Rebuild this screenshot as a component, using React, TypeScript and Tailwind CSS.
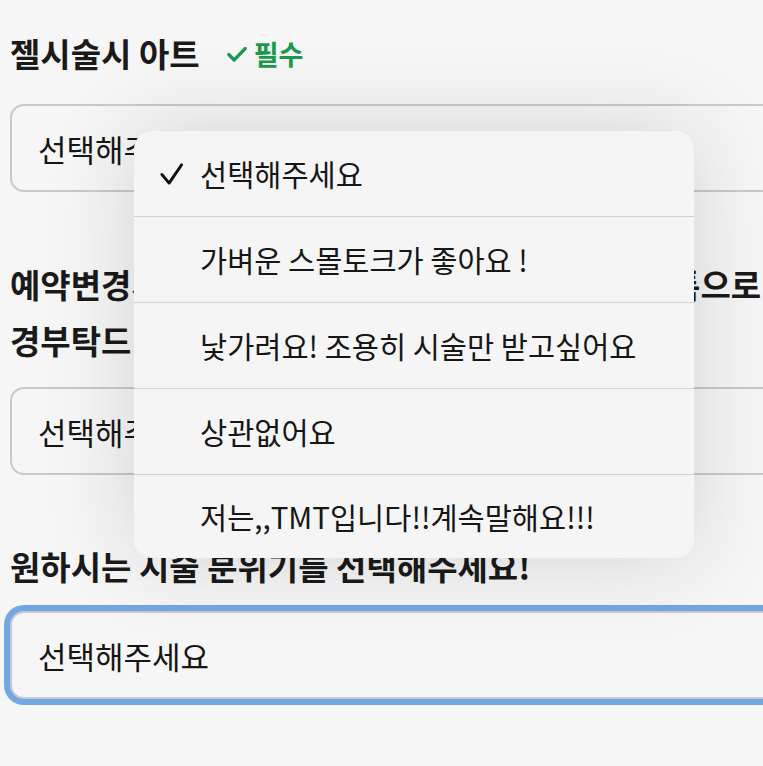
import React from "react";

const FONT = { fontFamily: '"Noto Sans CJK KR", "Noto Sans", sans-serif' };

function GreenCheck({ className }: { className?: string }) {
  return (
    <svg viewBox="0 0 24 24" fill="none" stroke="currentColor" strokeWidth={3.6} strokeLinecap="round" strokeLinejoin="round" className={className}>
      <path d="M3 12.5l6 6L21 6" />
    </svg>
  );
}

function BlackCheck({ className }: { className?: string }) {
  return (
    <svg viewBox="0 0 24 24" fill="none" stroke="currentColor" strokeWidth={3} strokeLinecap="round" strokeLinejoin="round" className={className}>
      <path d="M2 13l7.5 9L22.5 3" />
    </svg>
  );
}

function SelectBox({ focused = false }: { focused?: boolean }) {
  return (
    <div
      className={
        "w-[820px] h-[88px] rounded-[14px] border-2 border-[#c9c9c9] bg-[#f6f6f6] flex items-center pl-[26px] " +
        (focused ? "shadow-[0_0_0_6px_#72a7e6]" : "")
      }
    >
      <span className="text-[31px] text-[#161616] leading-none">선택해주세요</span>
    </div>
  );
}

const options = [
  "선택해주세요",
  "가벼운 스몰토크가 좋아요 !",
  "낯가려요! 조용히 시술만 받고싶어요",
  "상관없어요",
  "저는,,TMT입니다!!계속말해요!!!",
];

const heights = ["h-[85px]", "h-[86px]", "h-[86px]", "h-[86px]", "h-[84px]"];

export default function App() {
  return (
    <div className="relative w-[763px] h-[766px] overflow-hidden bg-[#f6f6f6]" style={FONT}>
      <div className="pl-[10px] pt-[26px] flex flex-col">
        <div className="flex items-center h-[56px]">
          <span className="text-[33px] font-bold text-[#1a1a1a] whitespace-nowrap">젤시술시 아트</span>
          <span className="ml-[26px] flex items-center text-[#1a9a4a]">
            <GreenCheck className="w-[22px] h-[22px]" />
            <span className="ml-[6px] text-[27px] font-bold">필수</span>
          </span>
        </div>
        <div className="mt-[22px]">
          <SelectBox />
        </div>

        <div className="mt-[64px] text-[33px] font-bold text-[#1a1a1a] leading-[56px] whitespace-nowrap">
          예약변경시 하루전까지 담당선생님께 개인카카오톡으로 변
          <br />
          경부탁드립니다
        </div>
        <div className="mt-[19px]">
          <SelectBox />
        </div>

        <div className="mt-[63px] text-[33px] font-bold text-[#1a1a1a] leading-[56px] whitespace-nowrap">
          원하시는 시술 분위기를 선택해주세요!
        </div>
        <div className="mt-[17px]">
          <SelectBox focused />
        </div>
      </div>

      <div className="absolute left-[134px] top-[131px] w-[560px] rounded-[18px] bg-[#f5f5f5] shadow-[0_0_90px_rgba(0,0,0,0.14)] overflow-hidden flex flex-col">
        {options.map((o, i) => (
          <div key={o} className={heights[i] + " flex items-center " + (i > 0 ? "border-t border-[#d2d2d2]" : "")}>
            <div className="w-[66px] flex justify-end pr-[17px]">
              {i === 0 && <BlackCheck className="w-[23px] h-[23px] text-[#111]" />}
            </div>
            <span className="text-[29.5px] text-[#161616] whitespace-nowrap">{o}</span>
          </div>
        ))}
      </div>
    </div>
  );
}
